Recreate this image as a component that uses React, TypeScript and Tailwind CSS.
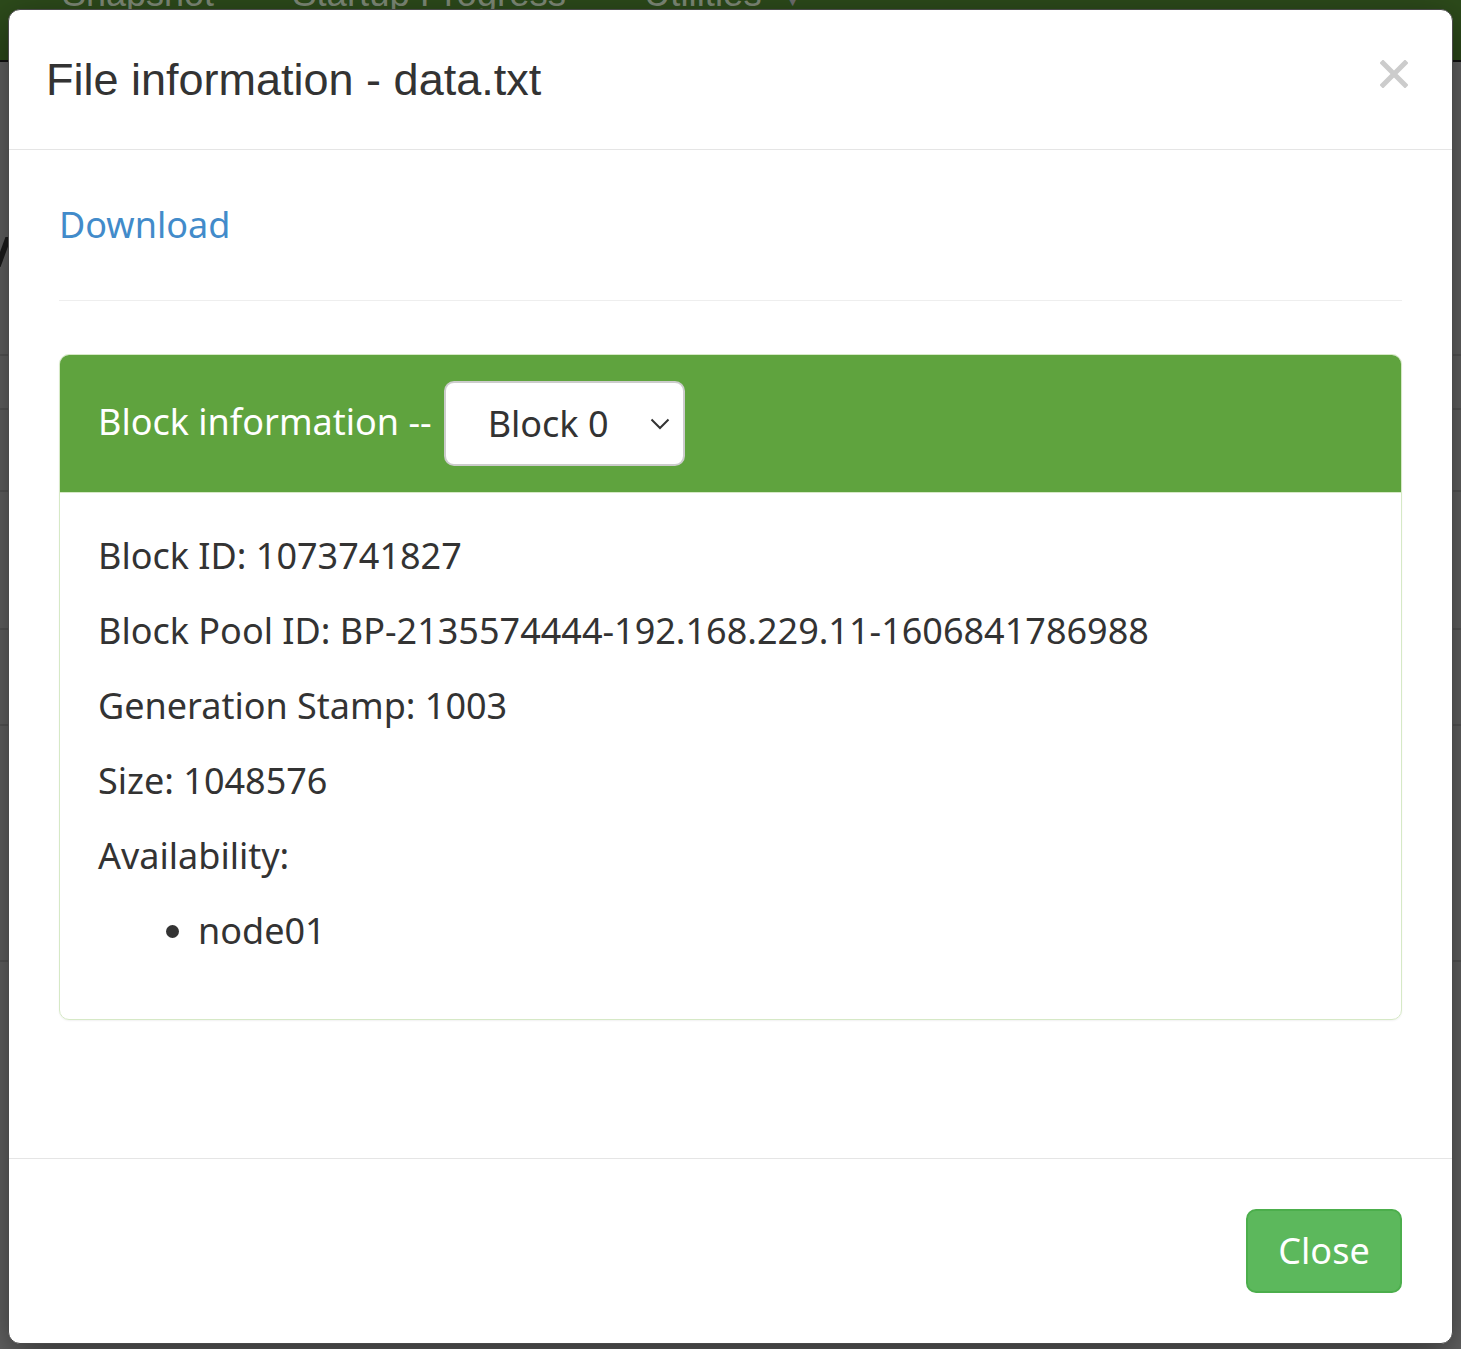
import React from 'react';

const bodyFont = { fontFamily: '"Noto Sans", "Open Sans", sans-serif' };
const navFont = { fontFamily: '"Liberation Sans", sans-serif' };

function CloseIcon() {
  return (
    <svg width="28" height="28" viewBox="0 0 28 28" aria-hidden="true">
      <path d="M3 3 L25 25 M25 3 L3 25" stroke="#cccccc" strokeWidth="5" strokeLinecap="square" />
    </svg>
  );
}

function Chevron() {
  return (
    <svg width="20" height="12" viewBox="0 0 20 12" aria-hidden="true">
      <path d="M1.5 1.5 L10 10 L18.5 1.5" fill="none" stroke="#333" strokeWidth="2" />
    </svg>
  );
}

export default function App() {
  const rows = [
    'Block ID: 1073741827',
    'Block Pool ID: BP-2135574444-192.168.229.11-1606841786988',
    'Generation Stamp: 1003',
    'Size: 1048576',
    'Availability:',
  ];

  return (
    <div className="relative w-[1461px] h-[1349px] overflow-hidden bg-[#656565]">
      {/* page behind the backdrop */}
      <div className="h-[62px] bg-[#2d4b1b] border-b-2 border-[#111] flex items-start pl-[62px] overflow-hidden">
        <span className="text-[36px] leading-none text-[#7f8a78] -mt-[24px]" style={navFont}>Snapshot</span>
        <span className="ml-[78px] text-[36.5px] leading-none text-[#7f8a78] -mt-[24px]" style={navFont}>Startup Progress</span>
        <span className="ml-[78px] text-[36.5px] leading-none text-[#7f8a78] -mt-[24px]" style={navFont}>Utilities</span>
        <span className="ml-[20px] text-[22px] leading-none text-[#6f6f6f] -mt-[12px]" style={navFont}>▼</span>
      </div>
      <div className="flex flex-col">
        <div className="h-[178px] pl-0 pt-[175px]">
          <div className="w-[6px] h-[30px] bg-[#1c1c1c] skew-x-[-20deg]" />
        </div>
        <div className="h-[116px] border-b-2 border-[#585858]" />
        <div className="h-[54px] border-b-2 border-[#585858]" />
        <div className="h-[82px] border-b-2 border-[#585858]" />
        <div className="h-[138px] border-b-2 border-[#585858]" />
        <div className="h-[96px] border-b-2 border-[#585858]" />
        <div className="h-[236px] border-b-2 border-[#585858]" />
      </div>

      {/* modal */}
      <div className="absolute left-[8px] top-[9px] w-[1445px] h-[1335px] bg-white border border-[#4a4a4a] rounded-[12px] shadow-[0_12px_40px_rgba(0,0,0,0.5)] flex flex-col overflow-hidden">
        <div className="flex items-start justify-between pl-[37px] pr-[44px] py-[37px] border-b border-[#e5e5e5]">
          <h4 className="text-[45px] leading-[65px] text-[#333]" style={{ fontFamily: '"Liberation Sans", Arial, sans-serif' }}>
            File information - data.txt
          </h4>
          <button className="mt-[13px]" aria-label="Close"><CloseIcon /></button>
        </div>

        <div className="flex-1 p-[50px]" style={bodyFont}>
          <a className="block text-[36px] leading-[50px] text-[#428bca]">Download</a>
          <hr className="mt-[50px] mb-[53px] border-t border-[#eeeeee]" />
          <div className="border border-[#d6e9c6] rounded-[10px] shadow-[0_1px_2px_rgba(0,0,0,0.06)]">
            <div className="flex items-center bg-[#5fa33e] rounded-t-[9px] px-[38px] py-[26px] border-b border-[#d6e9c6]">
              <span className="text-[36px] leading-[50px] text-white -mt-[4px]">Block information --</span>
              <div className="ml-[12px] w-[241px] h-[85px] bg-white border-2 border-[#cccccc] rounded-[10px] flex items-center justify-between pl-[42px] pr-[13px]">
                <span className="text-[36px] text-[#333]">Block 0</span>
                <Chevron />
              </div>
            </div>
            <div className="px-[38px] pt-[38px] pb-[38px] text-[36px] leading-[50px] text-[#333]">
              {rows.map((r) => (
                <p key={r} className="mb-[25px]">{r}</p>
              ))}
              <ul className="list-disc pl-[100px] mb-[25px]">
                <li>node01</li>
              </ul>
            </div>
          </div>
        </div>

        <div className="flex justify-end p-[50px] border-t border-[#e5e5e5]">
          <button className="h-[84px] w-[156px] bg-[#5cb85c] border-2 border-[#4cae4c] rounded-[10px] text-white text-[36px] leading-[50px]" style={bodyFont}>
            Close
          </button>
        </div>
      </div>
    </div>
  );
}
